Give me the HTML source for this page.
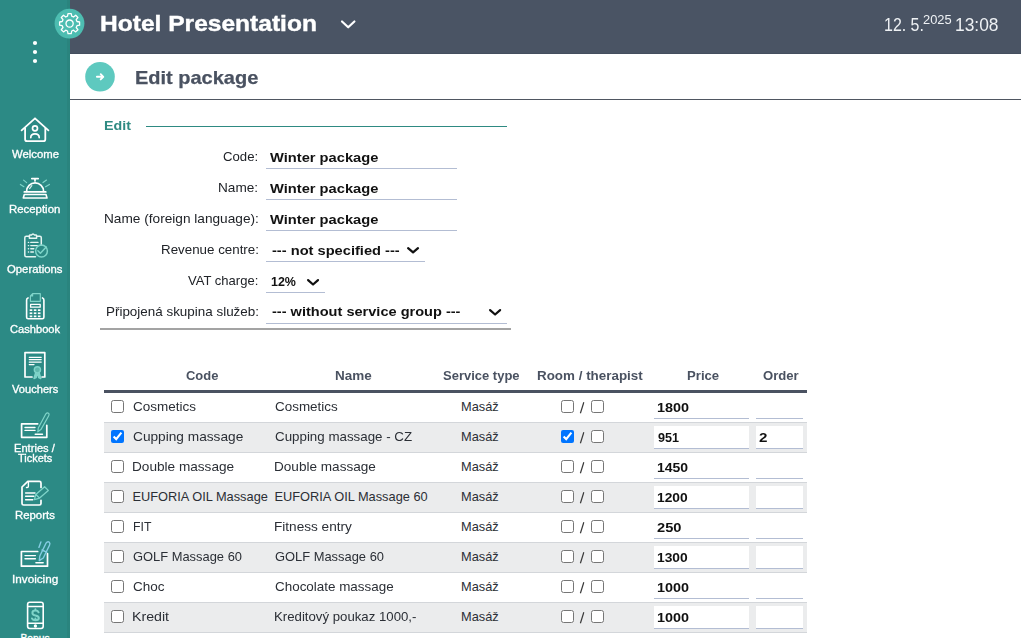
<!DOCTYPE html>
<html><head><meta charset="utf-8">
<style>
html,body{margin:0;padding:0;}
body{width:1021px;height:638px;overflow:hidden;position:relative;background:#fff;font-family:"Liberation Sans",sans-serif;}
.t{position:absolute;white-space:pre;line-height:0;transform-origin:0 0;}
.inp{position:absolute;box-sizing:border-box;border-bottom:1px solid #b3bdd3;}
.cb{position:absolute;margin:0;width:13px;height:13px;}
</style></head><body>
<div style="position:absolute;left:0;top:0;width:70px;height:638px;background:#2c8a85"></div>
<div style="position:absolute;left:67px;top:0;width:3px;height:638px;background:#2a847e"></div>
<div style="position:absolute;left:70px;top:0;width:951px;height:54px;background:#4a5464"></div>
<div style="position:absolute;left:70px;top:53px;width:951px;height:1px;background:#444e5e"></div>
<div style="position:absolute;left:70px;top:99px;width:951px;height:1px;background:#4f5661"></div>

<svg style="position:absolute;left:0;top:0" width="70" height="638" fill="none" stroke="#fff" stroke-width="1.7" stroke-linecap="round" stroke-linejoin="round">
  <circle cx="35" cy="43" r="2.1" fill="#fff" stroke="none"/>
  <circle cx="35" cy="52" r="2.1" fill="#fff" stroke="none"/>
  <circle cx="35" cy="61" r="2.1" fill="#fff" stroke="none"/>
  <!-- welcome -->
  <polyline points="21.6,130.3 35,118.3 48.4,130.3" stroke-width="1.8"/>
  <path d="M25.1,128.3 V139.2 q0,2 2,2 H43.3 q2,0 2,-2 V128.3" stroke-width="1.8"/>
  <circle cx="35" cy="128.3" r="2.5" stroke-width="1.7"/>
  <path d="M30.8,137.6 q0,-3.7 4.2,-3.7 q4.2,0 4.2,3.7" stroke-width="1.7"/>
  <!-- reception -->
  <path d="M31.8,178.6 H38.2 M35,178.6 V181"/>
  <path d="M26.6,191.5 A8.5,8.6 0 0 1 43.6,191.5"/>
  <path d="M24.3,191.9 H45.8"/>
  <path d="M29.6,188.6 L31.8,185.6" stroke="#d8f0ec" stroke-width="1.2"/>
  <path d="M24.3,194.5 H46 L47,198 H23.3 Z" stroke-width="1.6"/>
  <g stroke="#7fd4c9" stroke-width="1.2">
   <path d="M23.6,180.1 L26.6,182.6 M20.4,184.4 L23.9,186.7 M46.5,180.1 L43,182.6 M49.4,184.4 L45.6,186.8"/>
  </g>
  <!-- operations -->
  <path d="M29.3,236.3 H26.3 q-1.5,0 -1.5,1.5 V255.2 q0,1.5 1.5,1.5 H35.5 M41.3,245 V237.8 q0,-1.5 -1.5,-1.5 H37" stroke="#e6f5f2" stroke-width="1.5"/>
  <path d="M29.4,238.3 V235.8 q0,-0.7 0.8,-0.7 h1.2 q1.6,-2.4 3.2,0 h1.2 q0.8,0 0.8,0.7 V238.3 Z" stroke="#e6f5f2" stroke-width="1.5"/>
  <path d="M28.4,242.4 h0.2 M30.8,242.4 h7.2 M28.4,245.6 h0.2 M30.8,245.6 h6.5 M28.4,248.8 h0.2 M30.8,248.8 h3 M28.4,252 h0.2 M30.8,252 h2.6" stroke="#e6f5f2" stroke-width="1.4"/>
  <g stroke="#7fd4c9" stroke-width="1.5"><circle cx="41.5" cy="251" r="5.9"/><polyline points="37.9,250.8 40.4,253.2 46.2,247"/></g>
  <!-- cashbook -->
  <path d="M28,297.9 q-1.4,0.4 -1.4,2.2 V317.2 q0,1.6 1.6,1.6 H42.3 q1.6,0 1.6,-1.6 V300.1 q0,-1.8 -1.4,-2.2" stroke-width="1.6"/>
  <path d="M32.6,293.7 H40.3 V301.3 H30.4 V295.9 Z M30.4,295.9 H32.6 V293.7" stroke="#7fd4c9" stroke-width="1.2"/>
  <rect x="30.6" y="304.4" width="9.6" height="2.8" stroke-width="1.3"/>
  <g fill="#fff" stroke="none">
   <rect x="29.7" y="309.3" width="2.6" height="1.7"/><rect x="33.8" y="309.3" width="2.6" height="1.7"/><rect x="37.9" y="309.3" width="2.6" height="1.7"/>
   <rect x="29.7" y="312.4" width="2.6" height="1.7"/><rect x="33.8" y="312.4" width="2.6" height="1.7"/><rect x="37.9" y="312.4" width="2.6" height="1.7"/>
   <rect x="29.7" y="315.5" width="2.6" height="1.7"/><rect x="33.8" y="315.5" width="2.6" height="1.7"/><rect x="37.9" y="315.5" width="2.6" height="1.7"/>
  </g>
  <!-- vouchers -->
  <path d="M32,377 H25 V352.6 H44.8 V377 H42" stroke-width="1.7"/>
  <path d="M29.3,357.3 H41.2 M29.3,359.6 H41.2 M29.3,362.1 H41.2 M29.3,364.6 H34" stroke-width="1.3"/>
  <g stroke="#7fd4c9" stroke-width="1.4"><circle cx="37.4" cy="369.8" r="3.1" fill="#5fb8ad"/><path d="M35.6,372.8 L34,378.5 L36.2,377.6 L37,373.6 M39.2,372.8 L40.8,378.5 L38.6,377.6 L37.8,373.6" fill="#7fd4c9"/></g>
  <!-- entries -->
  <path d="M37.7,423.8 H21.6 V437.3 H46.8 V425.3" stroke-width="1.7"/>
  <path d="M25,427.5 H35 M25,430.4 H35 M35.2,434.2 H42.5" stroke-width="1.4"/>
  <g stroke="#7fd4c9" stroke-width="1.2"><path d="M37.8,431.8 L38.3,428 L45.9,413.8 Q47.4,412.2 48.9,413.6 Q49.4,414.8 48.6,416 L40.9,429.6 Z"/></g>
  <!-- reports -->
  <path d="M27.8,481.4 H39.4 q1.6,0 1.6,1.6 V487.5 M41,500.3 V503.4 q0,1.6 -1.6,1.6 H23.6 q-1.6,0 -1.6,-1.6 V487 L27.8,481.4" stroke-width="1.7"/>
  <path d="M28.4,482 V486.2 q0,1.3 -1.3,1.3 H26.5" stroke-width="1.4"/>
  <path d="M25.6,493 H35 M25.6,496.3 H34 M25.6,499.7 H32.8" stroke-width="1.4"/>
  <g stroke="#7fd4c9" stroke-width="1.3"><path d="M34.4,499.6 L35.8,494.4 L44.6,486.8 L48.3,490.4 L39.6,498.1 Z M36.2,494.8 L39.2,497.8"/></g>
  <!-- invoicing -->
  <path d="M37.7,551.5 H21.4 V566.2 H47.5 V553.6" stroke-width="1.7"/>
  <path d="M25,555.6 H35.4 M25,558.8 H35.4 M35.9,562.8 H43.2" stroke-width="1.4"/>
  <g stroke="#86cde3" stroke-width="1.4"><path d="M39.3,560.6 L39.8,556 L46,543.2 Q47.6,541 49.3,542.2 Q50.4,543.5 49.5,545.3 L43.3,558 Z M40.9,542 L38.9,547.4 M42,550 L46.6,552.2"/></g>
  <!-- bonus -->
  <rect x="27.6" y="602.2" width="15.6" height="26.3" rx="2.2" stroke-width="1.6"/>
  <path d="M27.6,606.5 H43.2 M27.6,623.2 H43.2" stroke-width="1.4"/>
  <circle cx="35.4" cy="626" r="0.8" fill="#fff"/>
  <path d="M38.6,612.3 q-0.7,-1.7 -3.2,-1.7 q-3,0 -3,2.3 q0,1.9 3.1,2.5 q3.3,0.6 3.3,2.6 q0,2.3 -3.4,2.3 q-2.5,0 -3.4,-1.8 M35.4,609.3 V610.4 M35.4,618.6 V620" stroke="#7fd4c9" stroke-width="2"/>
</svg>
<svg style="position:absolute;left:49px;top:3px" width="41" height="41">
 <defs><filter id="bl" x="-30%" y="-30%" width="160%" height="160%"><feGaussianBlur stdDeviation="0.45"/></filter></defs>
 <circle cx="20.5" cy="20.6" r="14.9" fill="#4dbdb1" filter="url(#bl)"/>
 <g transform="translate(20.6,20.6)" fill="none" stroke="#fff" stroke-width="1.3" stroke-linejoin="round">
  <path id="g" d="M-1.6,-10 H1.6 L2.1,-7.4 L3.9,-6.6 L6.1,-8.3 L8.3,-6.1 L6.6,-3.9 L7.4,-2.1 L10,-1.6 V1.6 L7.4,2.1 L6.6,3.9 L8.3,6.1 L6.1,8.3 L3.9,6.6 L2.1,7.4 L1.6,10 H-1.6 L-2.1,7.4 L-3.9,6.6 L-6.1,8.3 L-8.3,6.1 L-6.6,3.9 L-7.4,2.1 L-10,1.6 V-1.6 L-7.4,-2.1 L-6.6,-3.9 L-8.3,-6.1 L-6.1,-8.3 L-3.9,-6.6 L-2.1,-7.4 Z"/>
  <circle r="3.6"/>
 </g>
</svg>
<svg style="position:absolute;left:340px;top:19px" width="17" height="11"><polyline points="2,2.5 8.2,8.3 14.4,2.5" fill="none" stroke="#fff" stroke-width="2.2" stroke-linecap="round" stroke-linejoin="round"/></svg>
<svg style="position:absolute;left:85px;top:62px" width="30" height="30">
 <circle cx="15" cy="14.8" r="14.8" fill="#5ec9bf"/>
 <path d="M11.9,14.8 H18.2 M15.7,12.2 L18.3,14.8 L15.7,17.4" fill="none" stroke="#fff" stroke-width="1.9" stroke-linecap="round" stroke-linejoin="round"/>
</svg>
<div style="position:absolute;left:146px;top:125.5px;width:361px;height:1.5px;background:#2e8a82"></div>
<div style="position:absolute;left:100px;top:328px;width:411px;height:2px;background:#a3a3a3"></div>
<div style="position:absolute;left:266px;top:168px;width:191px;height:1px;background:#b3bdd3"></div>
<div style="position:absolute;left:266px;top:199px;width:191px;height:1px;background:#b3bdd3"></div>
<div style="position:absolute;left:266px;top:230px;width:191px;height:1px;background:#b3bdd3"></div>
<div style="position:absolute;left:266px;top:261px;width:159px;height:1px;background:#b3bdd3"></div>
<div style="position:absolute;left:266px;top:292px;width:59px;height:1px;background:#b3bdd3"></div>
<div style="position:absolute;left:266px;top:323px;width:241px;height:1px;background:#b3bdd3"></div>
<svg style="position:absolute;left:405.30px;top:245.30px;overflow:visible" width="16.10" height="10.50"><polyline points="3.10,3.10 8.05,7.40 13.00,3.10" fill="none" stroke="#111" stroke-width="2.2" stroke-linecap="round" stroke-linejoin="round"/></svg>
<svg style="position:absolute;left:305.30px;top:276.80px;overflow:visible" width="16.10" height="10.60"><polyline points="3.10,3.10 8.05,7.50 13.00,3.10" fill="none" stroke="#111" stroke-width="2.2" stroke-linecap="round" stroke-linejoin="round"/></svg>
<svg style="position:absolute;left:487.30px;top:307.10px;overflow:visible" width="16.20" height="10.60"><polyline points="3.10,3.10 8.10,7.50 13.10,3.10" fill="none" stroke="#111" stroke-width="2.2" stroke-linecap="round" stroke-linejoin="round"/></svg>
<div style="position:absolute;left:104px;top:390px;width:703px;height:3px;background:#4a5261"></div>
<div style="position:absolute;left:104px;top:393px;width:703px;height:29px;background:#ffffff"></div>
<div style="position:absolute;left:104px;top:422px;width:703px;height:1px;background:#d3d6da"></div>
<div class="inp" style="left:654px;top:396px;width:95px;height:23px;background:#ffffff"></div>
<div class="inp" style="left:756px;top:396px;width:47px;height:23px;background:#ffffff"></div>
<input type="checkbox" class="cb" style="left:111px;top:400px" >
<input type="checkbox" class="cb" style="left:561px;top:400px" >
<input type="checkbox" class="cb" style="left:591px;top:400px">
<svg style="position:absolute;left:578px;top:401px" width="8" height="13"><line x1="5.8" y1="1.3" x2="2.4" y2="12.3" stroke="#3a3a3a" stroke-width="1.2"/></svg>
<div style="position:absolute;left:104px;top:423px;width:703px;height:29px;background:#ebeced"></div>
<div style="position:absolute;left:104px;top:452px;width:703px;height:1px;background:#d3d6da"></div>
<div class="inp" style="left:654px;top:426px;width:95px;height:23px;background:#ffffff"></div>
<div class="inp" style="left:756px;top:426px;width:47px;height:23px;background:#ffffff"></div>
<input type="checkbox" class="cb" style="left:111px;top:430px" checked>
<input type="checkbox" class="cb" style="left:561px;top:430px" checked>
<input type="checkbox" class="cb" style="left:591px;top:430px">
<svg style="position:absolute;left:578px;top:431px" width="8" height="13"><line x1="5.8" y1="1.3" x2="2.4" y2="12.3" stroke="#3a3a3a" stroke-width="1.2"/></svg>
<div style="position:absolute;left:104px;top:453px;width:703px;height:29px;background:#ffffff"></div>
<div style="position:absolute;left:104px;top:482px;width:703px;height:1px;background:#d3d6da"></div>
<div class="inp" style="left:654px;top:456px;width:95px;height:23px;background:#ffffff"></div>
<div class="inp" style="left:756px;top:456px;width:47px;height:23px;background:#ffffff"></div>
<input type="checkbox" class="cb" style="left:111px;top:460px" >
<input type="checkbox" class="cb" style="left:561px;top:460px" >
<input type="checkbox" class="cb" style="left:591px;top:460px">
<svg style="position:absolute;left:578px;top:461px" width="8" height="13"><line x1="5.8" y1="1.3" x2="2.4" y2="12.3" stroke="#3a3a3a" stroke-width="1.2"/></svg>
<div style="position:absolute;left:104px;top:483px;width:703px;height:29px;background:#ebeced"></div>
<div style="position:absolute;left:104px;top:512px;width:703px;height:1px;background:#d3d6da"></div>
<div class="inp" style="left:654px;top:486px;width:95px;height:23px;background:#ffffff"></div>
<div class="inp" style="left:756px;top:486px;width:47px;height:23px;background:#ffffff"></div>
<input type="checkbox" class="cb" style="left:111px;top:490px" >
<input type="checkbox" class="cb" style="left:561px;top:490px" >
<input type="checkbox" class="cb" style="left:591px;top:490px">
<svg style="position:absolute;left:578px;top:491px" width="8" height="13"><line x1="5.8" y1="1.3" x2="2.4" y2="12.3" stroke="#3a3a3a" stroke-width="1.2"/></svg>
<div style="position:absolute;left:104px;top:513px;width:703px;height:29px;background:#ffffff"></div>
<div style="position:absolute;left:104px;top:542px;width:703px;height:1px;background:#d3d6da"></div>
<div class="inp" style="left:654px;top:516px;width:95px;height:23px;background:#ffffff"></div>
<div class="inp" style="left:756px;top:516px;width:47px;height:23px;background:#ffffff"></div>
<input type="checkbox" class="cb" style="left:111px;top:520px" >
<input type="checkbox" class="cb" style="left:561px;top:520px" >
<input type="checkbox" class="cb" style="left:591px;top:520px">
<svg style="position:absolute;left:578px;top:521px" width="8" height="13"><line x1="5.8" y1="1.3" x2="2.4" y2="12.3" stroke="#3a3a3a" stroke-width="1.2"/></svg>
<div style="position:absolute;left:104px;top:543px;width:703px;height:29px;background:#ebeced"></div>
<div style="position:absolute;left:104px;top:572px;width:703px;height:1px;background:#d3d6da"></div>
<div class="inp" style="left:654px;top:546px;width:95px;height:23px;background:#ffffff"></div>
<div class="inp" style="left:756px;top:546px;width:47px;height:23px;background:#ffffff"></div>
<input type="checkbox" class="cb" style="left:111px;top:550px" >
<input type="checkbox" class="cb" style="left:561px;top:550px" >
<input type="checkbox" class="cb" style="left:591px;top:550px">
<svg style="position:absolute;left:578px;top:551px" width="8" height="13"><line x1="5.8" y1="1.3" x2="2.4" y2="12.3" stroke="#3a3a3a" stroke-width="1.2"/></svg>
<div style="position:absolute;left:104px;top:573px;width:703px;height:29px;background:#ffffff"></div>
<div style="position:absolute;left:104px;top:602px;width:703px;height:1px;background:#d3d6da"></div>
<div class="inp" style="left:654px;top:576px;width:95px;height:23px;background:#ffffff"></div>
<div class="inp" style="left:756px;top:576px;width:47px;height:23px;background:#ffffff"></div>
<input type="checkbox" class="cb" style="left:111px;top:580px" >
<input type="checkbox" class="cb" style="left:561px;top:580px" >
<input type="checkbox" class="cb" style="left:591px;top:580px">
<svg style="position:absolute;left:578px;top:581px" width="8" height="13"><line x1="5.8" y1="1.3" x2="2.4" y2="12.3" stroke="#3a3a3a" stroke-width="1.2"/></svg>
<div style="position:absolute;left:104px;top:603px;width:703px;height:29px;background:#ebeced"></div>
<div style="position:absolute;left:104px;top:632px;width:703px;height:1px;background:#d3d6da"></div>
<div class="inp" style="left:654px;top:606px;width:95px;height:23px;background:#ffffff"></div>
<div class="inp" style="left:756px;top:606px;width:47px;height:23px;background:#ffffff"></div>
<input type="checkbox" class="cb" style="left:111px;top:610px" >
<input type="checkbox" class="cb" style="left:561px;top:610px" >
<input type="checkbox" class="cb" style="left:591px;top:610px">
<svg style="position:absolute;left:578px;top:611px" width="8" height="13"><line x1="5.8" y1="1.3" x2="2.4" y2="12.3" stroke="#3a3a3a" stroke-width="1.2"/></svg>
<div class="t" style="left:100.27px;top:23.55px;font-size:21.5px;font-weight:bold;color:#ffffff;transform:scaleX(1.142);-webkit-text-stroke:0.4px #fff;">Hotel Presentation</div>
<div class="t" style="left:883.50px;top:25.42px;font-size:19px;font-weight:normal;color:#eef1f4;transform:scaleX(0.840);">12. 5.</div>
<div class="t" style="left:922.79px;top:19.54px;font-size:12.3px;font-weight:normal;color:#eef1f4;transform:scaleX(1.050);">2025</div>
<div class="t" style="left:955.41px;top:25.42px;font-size:19px;font-weight:normal;color:#eef1f4;transform:scaleX(0.915);">13:08</div>
<div class="t" style="left:135.25px;top:77.59px;font-size:18.5px;font-weight:bold;color:#4a5261;transform:scaleX(1.080);-webkit-text-stroke:0.25px #4a5261;">Edit package</div>
<div class="t" style="left:104.11px;top:125.50px;font-size:13px;font-weight:bold;color:#2e8a82;transform:scaleX(1.098);">Edit</div>
<div class="t" style="left:223.38px;top:157.36px;font-size:12.8px;font-weight:normal;color:#202328;transform:scaleX(1.028);">Code:</div>
<div class="t" style="left:218.44px;top:188.36px;font-size:12.8px;font-weight:normal;color:#202328;transform:scaleX(1.063);">Name:</div>
<div class="t" style="left:103.63px;top:219.36px;font-size:12.8px;font-weight:normal;color:#202328;transform:scaleX(1.067);">Name (foreign language):</div>
<div class="t" style="left:160.56px;top:250.36px;font-size:12.8px;font-weight:normal;color:#202328;transform:scaleX(1.043);">Revenue centre:</div>
<div class="t" style="left:187.90px;top:281.36px;font-size:12.8px;font-weight:normal;color:#202328;transform:scaleX(1.019);">VAT charge:</div>
<div class="t" style="left:105.55px;top:312.36px;font-size:12.8px;font-weight:normal;color:#202328;transform:scaleX(1.049);">Připojená skupina služeb:</div>
<div class="t" style="left:269.90px;top:157.50px;font-size:13px;font-weight:bold;color:#111111;transform:scaleX(1.129);">Winter package</div>
<div class="t" style="left:269.90px;top:188.50px;font-size:13px;font-weight:bold;color:#111111;transform:scaleX(1.129);">Winter package</div>
<div class="t" style="left:269.90px;top:219.50px;font-size:13px;font-weight:bold;color:#111111;transform:scaleX(1.129);">Winter package</div>
<div class="t" style="left:271.84px;top:250.50px;font-size:13px;font-weight:bold;color:#111111;transform:scaleX(1.126);">--- not specified ---</div>
<div class="t" style="left:271.22px;top:281.50px;font-size:13px;font-weight:bold;color:#111111;transform:scaleX(0.959);">12%</div>
<div class="t" style="left:272.04px;top:312.20px;font-size:13px;font-weight:bold;color:#111111;transform:scaleX(1.120);">--- without service group ---</div>
<div class="t" style="left:185.59px;top:375.56px;font-size:12.8px;font-weight:bold;color:#4a5261;transform:scaleX(1.013);">Code</div>
<div class="t" style="left:334.56px;top:375.56px;font-size:12.8px;font-weight:bold;color:#4a5261;transform:scaleX(1.055);">Name</div>
<div class="t" style="left:442.80px;top:375.56px;font-size:12.8px;font-weight:bold;color:#4a5261;transform:scaleX(1.015);">Service type</div>
<div class="t" style="left:537.36px;top:375.56px;font-size:12.8px;font-weight:bold;color:#4a5261;transform:scaleX(1.047);">Room / therapist</div>
<div class="t" style="left:686.88px;top:375.56px;font-size:12.8px;font-weight:bold;color:#4a5261;transform:scaleX(1.027);">Price</div>
<div class="t" style="left:762.69px;top:375.56px;font-size:12.8px;font-weight:bold;color:#4a5261;transform:scaleX(1.024);">Order</div>
<div class="t" style="left:132.87px;top:406.86px;font-size:12.8px;font-weight:normal;color:#2b2f36;transform:scaleX(1.055);">Cosmetics</div>
<div class="t" style="left:274.87px;top:406.86px;font-size:12.8px;font-weight:normal;color:#2b2f36;transform:scaleX(1.050);">Cosmetics</div>
<div class="t" style="left:461.00px;top:406.86px;font-size:12.8px;font-weight:normal;color:#2b2f36;">Masáž</div>
<div class="t" style="left:657.00px;top:407.80px;font-size:13px;font-weight:bold;color:#111111;transform:scaleX(1.109);">1800</div>
<div class="t" style="left:132.86px;top:436.86px;font-size:12.8px;font-weight:normal;color:#2b2f36;transform:scaleX(1.069);">Cupping massage</div>
<div class="t" style="left:274.87px;top:436.86px;font-size:12.8px;font-weight:normal;color:#2b2f36;transform:scaleX(1.042);">Cupping massage - CZ</div>
<div class="t" style="left:461.00px;top:436.86px;font-size:12.8px;font-weight:normal;color:#2b2f36;">Masáž</div>
<div class="t" style="left:657.51px;top:437.80px;font-size:13px;font-weight:bold;color:#111111;transform:scaleX(0.969);">951</div>
<div class="t" style="left:758.52px;top:437.80px;font-size:13px;font-weight:bold;color:#111111;transform:scaleX(1.169);">2</div>
<div class="t" style="left:132.44px;top:466.86px;font-size:12.8px;font-weight:normal;color:#2b2f36;transform:scaleX(1.063);">Double massage</div>
<div class="t" style="left:274.44px;top:466.86px;font-size:12.8px;font-weight:normal;color:#2b2f36;transform:scaleX(1.061);">Double massage</div>
<div class="t" style="left:461.00px;top:466.86px;font-size:12.8px;font-weight:normal;color:#2b2f36;">Masáž</div>
<div class="t" style="left:657.03px;top:467.80px;font-size:13px;font-weight:bold;color:#111111;transform:scaleX(1.077);">1450</div>
<div class="t" style="left:132.50px;top:496.86px;font-size:12.8px;font-weight:normal;color:#2b2f36;">EUFORIA OIL Massage</div>
<div class="t" style="left:274.50px;top:496.86px;font-size:12.8px;font-weight:normal;color:#2b2f36;">EUFORIA OIL Massage 60</div>
<div class="t" style="left:461.00px;top:496.86px;font-size:12.8px;font-weight:normal;color:#2b2f36;">Masáž</div>
<div class="t" style="left:657.04px;top:497.80px;font-size:13px;font-weight:bold;color:#111111;transform:scaleX(1.062);">1200</div>
<div class="t" style="left:132.54px;top:526.86px;font-size:12.8px;font-weight:normal;color:#2b2f36;transform:scaleX(0.957);">FIT</div>
<div class="t" style="left:274.44px;top:526.86px;font-size:12.8px;font-weight:normal;color:#2b2f36;transform:scaleX(1.063);">Fitness entry</div>
<div class="t" style="left:461.00px;top:526.86px;font-size:12.8px;font-weight:normal;color:#2b2f36;">Masáž</div>
<div class="t" style="left:657.44px;top:527.80px;font-size:13px;font-weight:bold;color:#111111;transform:scaleX(1.127);">250</div>
<div class="t" style="left:132.90px;top:556.86px;font-size:12.8px;font-weight:normal;color:#2b2f36;transform:scaleX(1.008);">GOLF Massage 60</div>
<div class="t" style="left:274.90px;top:556.86px;font-size:12.8px;font-weight:normal;color:#2b2f36;transform:scaleX(1.008);">GOLF Massage 60</div>
<div class="t" style="left:461.00px;top:556.86px;font-size:12.8px;font-weight:normal;color:#2b2f36;">Masáž</div>
<div class="t" style="left:657.04px;top:557.80px;font-size:13px;font-weight:bold;color:#111111;transform:scaleX(1.062);">1300</div>
<div class="t" style="left:132.87px;top:586.86px;font-size:12.8px;font-weight:normal;color:#2b2f36;transform:scaleX(1.056);">Choc</div>
<div class="t" style="left:274.87px;top:586.86px;font-size:12.8px;font-weight:normal;color:#2b2f36;transform:scaleX(1.049);">Chocolate massage</div>
<div class="t" style="left:461.00px;top:586.86px;font-size:12.8px;font-weight:normal;color:#2b2f36;">Masáž</div>
<div class="t" style="left:657.00px;top:587.80px;font-size:13px;font-weight:bold;color:#111111;transform:scaleX(1.106);">1000</div>
<div class="t" style="left:132.39px;top:616.86px;font-size:12.8px;font-weight:normal;color:#2b2f36;transform:scaleX(1.108);">Kredit</div>
<div class="t" style="left:274.47px;top:616.86px;font-size:12.8px;font-weight:normal;color:#2b2f36;transform:scaleX(1.032);">Kreditový poukaz 1000,-</div>
<div class="t" style="left:461.00px;top:616.86px;font-size:12.8px;font-weight:normal;color:#2b2f36;">Masáž</div>
<div class="t" style="left:657.00px;top:617.80px;font-size:13px;font-weight:bold;color:#111111;transform:scaleX(1.106);">1000</div>
<div class="t" style="left:11.60px;top:154.93px;font-size:10.3px;font-weight:normal;color:#ffffff;transform:scaleX(1.101);-webkit-text-stroke:0.3px #fff;">Welcome</div>
<div class="t" style="left:9.31px;top:209.73px;font-size:10.3px;font-weight:normal;color:#ffffff;transform:scaleX(1.107);-webkit-text-stroke:0.3px #fff;">Reception</div>
<div class="t" style="left:7.27px;top:269.93px;font-size:10.3px;font-weight:normal;color:#ffffff;transform:scaleX(1.101);-webkit-text-stroke:0.3px #fff;">Operations</div>
<div class="t" style="left:9.68px;top:329.93px;font-size:10.3px;font-weight:normal;color:#ffffff;transform:scaleX(1.081);-webkit-text-stroke:0.3px #fff;">Cashbook</div>
<div class="t" style="left:12.00px;top:389.93px;font-size:10.3px;font-weight:normal;color:#ffffff;transform:scaleX(1.079);-webkit-text-stroke:0.3px #fff;">Vouchers</div>
<div class="t" style="left:14.43px;top:449.03px;font-size:10.3px;font-weight:normal;color:#ffffff;transform:scaleX(1.081);-webkit-text-stroke:0.3px #fff;">Entries /</div>
<div class="t" style="left:18.03px;top:458.83px;font-size:10.3px;font-weight:normal;color:#ffffff;transform:scaleX(1.064);-webkit-text-stroke:0.3px #fff;">Tickets</div>
<div class="t" style="left:14.91px;top:516.33px;font-size:10.3px;font-weight:normal;color:#ffffff;transform:scaleX(1.105);-webkit-text-stroke:0.3px #fff;">Reports</div>
<div class="t" style="left:11.58px;top:579.63px;font-size:10.3px;font-weight:normal;color:#ffffff;transform:scaleX(1.138);-webkit-text-stroke:0.3px #fff;">Invoicing</div>
<div class="t" style="left:20.40px;top:638.93px;font-size:10.3px;font-weight:normal;color:#ffffff;-webkit-text-stroke:0.3px #fff;">Bonus</div>
</body></html>
